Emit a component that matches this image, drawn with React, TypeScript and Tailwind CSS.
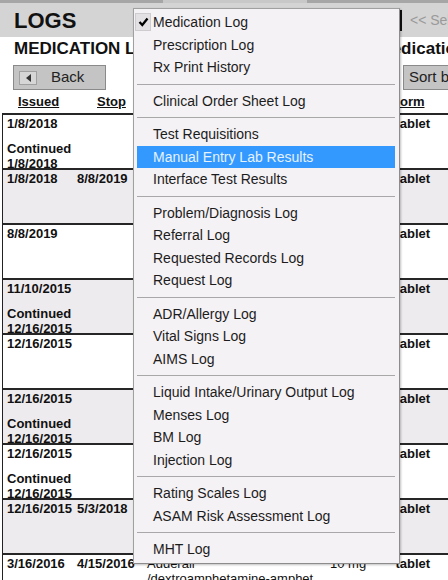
import React from 'react';

type Row = {
  issued: string;
  stop?: string;
  cont?: string;
  drug?: string[];
  strength?: string;
};

const rows: Row[] = [
  { issued: '1/8/2018', cont: '1/8/2018' },
  { issued: '1/8/2018', stop: '8/8/2019' },
  { issued: '8/8/2019' },
  { issued: '11/10/2015', cont: '12/16/2015' },
  { issued: '12/16/2015' },
  { issued: '12/16/2015', cont: '12/16/2015' },
  { issued: '12/16/2015', cont: '12/16/2015' },
  { issued: '12/16/2015', stop: '5/3/2018' },
  { issued: '3/16/2016', stop: '4/15/2016', drug: ['Adderall', '/dextroamphetamine-amphet'], strength: '10 mg' },
];

type MenuEntry = { label: string; checked?: boolean; active?: boolean } | 'sep';

const menu: MenuEntry[] = [
  { label: 'Medication Log', checked: true },
  { label: 'Prescription Log' },
  { label: 'Rx Print History' },
  'sep',
  { label: 'Clinical Order Sheet Log' },
  'sep',
  { label: 'Test Requisitions' },
  { label: 'Manual Entry Lab Results', active: true },
  { label: 'Interface Test Results' },
  'sep',
  { label: 'Problem/Diagnosis Log' },
  { label: 'Referral Log' },
  { label: 'Requested Records Log' },
  { label: 'Request Log' },
  'sep',
  { label: 'ADR/Allergy Log' },
  { label: 'Vital Signs Log' },
  { label: 'AIMS Log' },
  'sep',
  { label: 'Liquid Intake/Urinary Output Log' },
  { label: 'Menses Log' },
  { label: 'BM Log' },
  { label: 'Injection Log' },
  'sep',
  { label: 'Rating Scales Log' },
  { label: 'ASAM Risk Assessment Log' },
  'sep',
  { label: 'MHT Log' },
];

const LogMenu: React.FC = () => (
  <div className="absolute left-[133px] top-[8px] w-[267px] border border-[#a0a0a0] border-r-[#8c8c8c] border-b-[#8c8c8c] bg-[#f5f2f5] pl-[3px] pr-[4px] py-[2px] shadow-[1px_1px_2px_rgba(0,0,0,0.25)]">
    {menu.map((m, i) =>
      m === 'sep' ? (
        <div key={i} className="h-[11px] flex items-center">
          <div className="h-px w-full bg-[#a8a8a8]" />
        </div>
      ) : (
        <div
          key={i}
          className={`flex items-center h-[22.5px] text-[14px] leading-[22.5px] whitespace-nowrap ${
            m.active ? 'bg-[#3399ff] text-[#e6f2ff]' : 'text-[#1c1c1c]'
          }`}
        >
          {/* check slot */}
          <div className="-ml-[2px] w-[18px] h-full flex items-center shrink-0">
            {m.checked && (
              <div className="w-[16px] h-[18px] bg-[#e4e1e4] border border-[#cfcccf] flex items-center justify-center">
                <svg width="11" height="10" viewBox="0 0 11 10">
                  <polyline points="1.5,5 4.3,8 9.5,1.5" fill="none" stroke="#000" strokeWidth="2.3" />
                </svg>
              </div>
            )}
          </div>
          <span>{m.label}</span>
        </div>
      )
    )}
  </div>
);

const Button: React.FC<{ label: string; icon?: boolean; className?: string }> = ({ label, icon, className = '' }) => (
  <div className={`flex items-center shrink-0 h-[25px] border border-[#8a8a8a] bg-[#c4c4c4] ${className}`}>
    {icon && (
      <div className="ml-[5px] w-[18px] h-[14px] shrink-0 bg-[#d6d6d6] border border-[#a0a0a0] flex items-center justify-center">
        <div className="w-0 h-0 border-y-[4px] border-y-transparent border-r-[5px] border-r-[#333]" />
      </div>
    )}
    <span className={`text-[15px] text-[#222] whitespace-nowrap ${icon ? 'ml-[14px]' : 'ml-[5px]'}`}>{label}</span>
  </div>
);

export default function App() {
  return (
    <div className="relative w-[448px] h-[580px] overflow-hidden bg-white font-['Liberation_Sans',Arial,sans-serif]">
      {/* top strip */}
      <div className="flex h-[3px] bg-[#a6a6a6]">
        <div className="ml-[163px] w-[144px] shrink-0 bg-[#c8c8c8]" />
      </div>

      {/* header */}
      <div className="flex items-center h-[34px] bg-[#d4d4d4]">
        <div className="w-[399px] shrink-0 pl-[14px] pt-[1px] text-[22px] leading-[22px] font-bold text-[#111]">LOGS</div>
        <div className="w-[3px] h-[21px] shrink-0 bg-[#111]" />
        <div className="ml-[8px] shrink-0 text-[14px] text-[#9a9a9a] whitespace-nowrap">&lt;&lt; Select Patient</div>
      </div>

      {/* title */}
      <div className="flex mt-[2px] h-[20px] text-[17px] leading-[20px] font-bold text-[#111] whitespace-nowrap">
        <div className="w-[377.5px] shrink-0 pl-[14px]">MEDICATION LOG</div>
        <div className="shrink-0">Medications</div>
      </div>

      {/* buttons */}
      <div className="flex mt-[6px]">
        <Button label="Back" icon className="ml-[13px] w-[93px]" />
        <Button label="Sort by" className="ml-[297px] w-[80px]" />
      </div>

      {/* column headers */}
      <div className="flex mt-[4px] h-[15px] text-[13px] leading-[15px] font-bold underline text-[#111]">
        <div className="w-[97px] shrink-0 pl-[18px]">Issued</div>
        <div className="w-[295px] shrink-0">Stop</div>
        <div className="shrink-0">Form</div>
      </div>

      {/* table */}
      <div className="mt-[4px] ml-[2px] border-l border-[#222]">
        {rows.map((r, i) => (
          <div
            key={i}
            className={`flex h-[55px] overflow-hidden border-t-2 border-[#262626] pt-[1px] text-[13px] leading-[15px] font-bold text-[#111] ${
              i % 2 === 1 ? 'bg-[#eeebee]' : 'bg-white'
            }`}
          >
            <div className="w-[74px] pl-[4px] shrink-0">
              <div>{r.issued}</div>
              {r.cont && (
                <>
                  <div className="mt-[10px]">Continued</div>
                  <div>{r.cont}</div>
                </>
              )}
            </div>
            <div className="w-[70px] shrink-0 whitespace-nowrap">{r.stop}</div>
            <div className="w-[183px] shrink-0 font-normal">
              {r.drug?.map((d) => <div key={d}>{d}</div>)}
            </div>
            <div className="w-[65.5px] shrink-0 font-normal">{r.strength}</div>
            <div className="shrink-0 whitespace-nowrap">tablet</div>
          </div>
        ))}
      </div>

      <LogMenu />
    </div>
  );
}
